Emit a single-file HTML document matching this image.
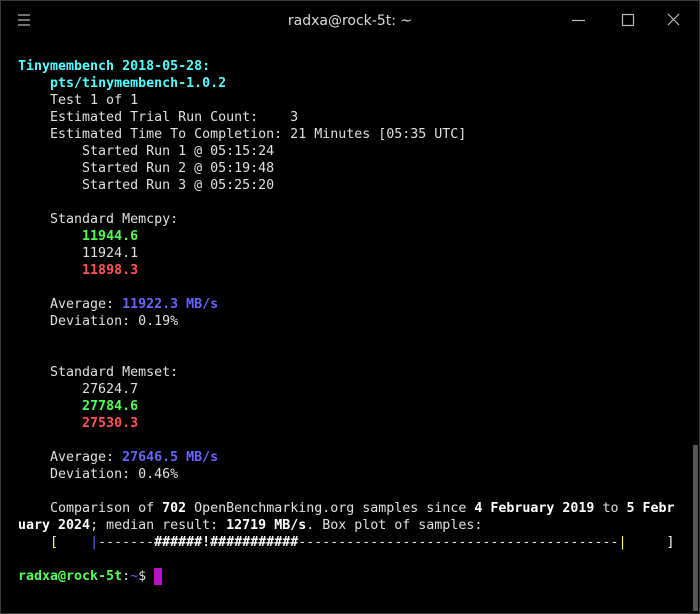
<!DOCTYPE html>
<html><head><style>
body{margin:0;background:#000;width:700px;height:614px;overflow:hidden;position:relative}
.win{position:absolute;left:0;top:0;width:698px;height:612px;border:1px solid #3a3a3a;background:#000}
.title{position:absolute;top:13px;left:0;width:700px;text-align:center;color:#dcdcdc;font:14px "DejaVu Sans","Liberation Sans",sans-serif}
pre{position:absolute;left:18px;top:58px;margin:0;font:13.3px/17px "DejaVu Sans Mono","Liberation Mono",monospace;color:#e0e0e0}
.c{color:#5ff;font-weight:bold}.g{color:#5f5;font-weight:bold}.r{color:#f55;font-weight:bold}.b{color:#66f;font-weight:bold}.w{color:#fff;font-weight:bold}.y{color:#ff5}.bl{color:#66f}.wh{color:#fff}
.cur{display:inline-block;width:8px;height:17px;background:#c010c0;vertical-align:top}
.sb{position:absolute;left:693px;top:445px;width:5px;height:166px;background:#555}
</style></head><body>
<div class="win"></div>
<div class="title">radxa@rock-5t: ~</div>
<svg style="position:absolute;left:0;top:0" width="700" height="40">
<g stroke="#bbb" stroke-width="1.2" fill="none">
<path d="M18 15h12M18 20h12M18 25h12"/>
<path d="M572 20.5h13"/>
<rect x="622.5" y="14.5" width="11" height="11"/>
<path d="M668 14l11 11M679 14l-11 11"/>
</g></svg>
<pre><span class="c">Tinymembench 2018-05-28:</span>
    <span class="c">pts/tinymembench-1.0.2</span>
    Test 1 of 1
    Estimated Trial Run Count:    3
    Estimated Time To Completion: 21 Minutes [05:35 UTC]
        Started Run 1 @ 05:15:24
        Started Run 2 @ 05:19:48
        Started Run 3 @ 05:25:20

    Standard Memcpy:
        <span class="g">11944.6</span>
        11924.1
        <span class="r">11898.3</span>

    Average: <span class="b">11922.3 MB/s</span>
    Deviation: 0.19%


    Standard Memset:
        27624.7
        <span class="g">27784.6</span>
        <span class="r">27530.3</span>

    Average: <span class="b">27646.5 MB/s</span>
    Deviation: 0.46%

    Comparison of <span class="w">702</span> OpenBenchmarking.org samples since <span class="w">4 February 2019</span> to <span class="w">5 Febr</span>
<span class="w">uary 2024</span>; median result: <span class="w">12719 MB/s</span>. Box plot of samples:
    <span class="y">[</span>    <span class="bl">|</span>-------<span class="w">######!###########</span>----------------------------------------<span class="y">|</span>     <span class="wh">]</span>

<span class="g">radxa@rock-5t</span>:<span class="bl">~</span>$ <span class="cur"></span></pre>
<div class="sb"></div>
</body></html>
